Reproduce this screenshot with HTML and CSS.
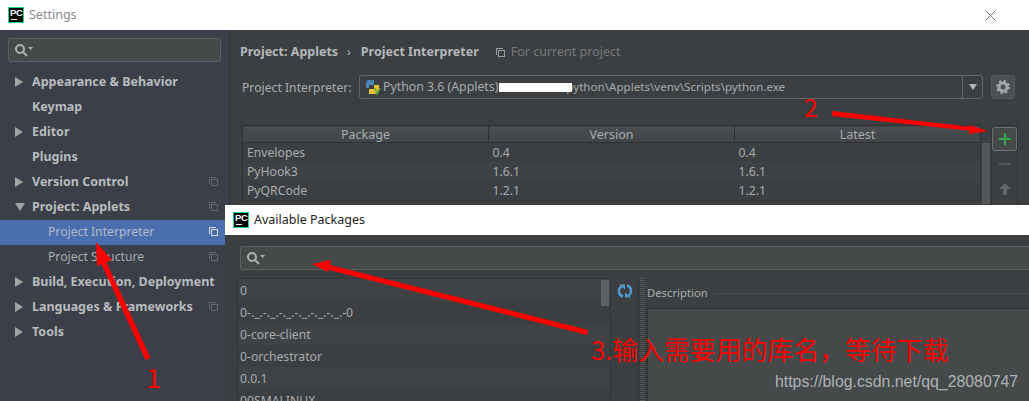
FILE: index.html
```html
<!DOCTYPE html>
<html lang="en">
<head>
<meta charset="utf-8">
<title>Settings</title>
<link rel="stylesheet" href="styles.css">
</head>
<body>
<div class="window">
  <header class="titlebar">
    <span class="pc-logo"><span class="pc-text">PC</span><span class="pc-bar"></span></span>
    <span class="title-text">Settings</span>
    <svg class="close" width="11" height="11" viewBox="0 0 11 11"><path d="M.5.5l10 10M10.5.5l-10 10" stroke="#777" fill="none"/></svg>
  </header>
  <div class="main">
    <aside class="sidebar">
      <div class="side-search">
        <svg width="19" height="14" viewBox="0 0 19 14"><circle cx="6" cy="6" r="4" fill="none" stroke="#afb1b3" stroke-width="2"/><path d="M9 9l4 4" stroke="#afb1b3" stroke-width="2.2"/><path d="M14 4h5l-2.500 3z" fill="#afb1b3"/></svg>
      </div>
      <ul class="tree">
        <li class="node"><i class="tri"></i><b>Appearance &amp; Behavior</b></li>
        <li class="node"><i class="tri none"></i><b>Keymap</b></li>
        <li class="node"><i class="tri"></i><b>Editor</b></li>
        <li class="node"><i class="tri none"></i><b>Plugins</b></li>
        <li class="node"><i class="tri"></i><b>Version Control</b><i class="copy"></i></li>
        <li class="node"><i class="tri open"></i><b>Project: Applets</b><i class="copy"></i></li>
        <li class="node sub selected"><span>Project Interpreter</span><i class="copy"></i></li>
        <li class="node sub"><span>Project Structure</span><i class="copy"></i></li>
        <li class="node"><i class="tri"></i><b>Build, Execution, Deployment</b></li>
        <li class="node"><i class="tri"></i><b>Languages &amp; Frameworks</b><i class="copy"></i></li>
        <li class="node"><i class="tri"></i><b>Tools</b></li>
      </ul>
    </aside>
    <section class="content">
      <div class="crumbs">
        <b>Project: Applets</b><span class="sep">›</span><b>Project Interpreter</b>
        <i class="copy light"></i><span class="scope">For current project</span>
      </div>
      <div class="interp-row">
        <label class="interp-label">Project Interpreter:</label>
        <div class="combo">
          <svg class="py" width="16" height="16" viewBox="0 0 16 16"><path d="M3 1h6v5H4v3H1V5c0-2 1-4 2-4z" fill="#4a86b8"/><path d="M9 6h5v4c0 3-2 5-4 5H4v-5h5z" fill="#e6c02f"/><path d="M10 9l2 6 3-6" fill="none" stroke="#5aa63c" stroke-width="1.500"/></svg>
          <span class="combo-text">Python 3.6 (Applets)<span class="redact"></span><span class="combo-path">python\Applets\venv\Scripts\python.exe</span></span>
          <span class="combo-btn"><i></i></span>
        </div>
        <button class="gear" type="button"><svg width="14" height="14" viewBox="0 0 14 14"><circle cx="7" cy="7" r="4" fill="none" stroke="#a3a6a8" stroke-width="3"/><circle cx="7" cy="7" r="6" fill="none" stroke="#a3a6a8" stroke-width="2" stroke-dasharray="2.300 2.400"/></svg></button>
      </div>
      <div class="packages">
        <table class="pkg-table">
          <thead><tr><th>Package</th><th>Version</th><th>Latest</th></tr></thead>
          <tbody>
            <tr><td>Envelopes</td><td>0.4</td><td>0.4</td></tr>
            <tr><td>PyHook3</td><td>1.6.1</td><td>1.6.1</td></tr>
            <tr><td>PyQRCode</td><td>1.2.1</td><td>1.2.1</td></tr>
          </tbody>
        </table>
        <div class="pkg-scroll"></div>
        <div class="pkg-tools">
          <span class="plus"><svg width="12" height="12" viewBox="0 0 12 12"><path d="M6 0v12M0 6h12" stroke="#2fa84f" stroke-width="2"/></svg></span>
          <span class="minus"></span>
          <svg class="up" width="12" height="12" viewBox="0 0 12 12"><path d="M6 0l6 6H8v6H4V6H0z" fill="#63676a"/></svg>
        </div>
      </div>
    </section>
  </div>
</div>

<div class="dialog">
  <header class="dlg-title">
    <span class="pc-logo"><span class="pc-text">PC</span><span class="pc-bar"></span></span>
    <span>Available Packages</span>
  </header>
  <div class="dlg-search">
    <svg width="19" height="14" viewBox="0 0 19 14"><circle cx="6" cy="6" r="4" fill="none" stroke="#afb1b3" stroke-width="2"/><path d="M9 9l4 4" stroke="#afb1b3" stroke-width="2.2"/><path d="M14 4h5l-2.500 3z" fill="#afb1b3"/></svg>
  </div>
  <div class="dlg-body">
    <div class="list-wrap">
      <ul class="dlg-list">
        <li>0</li>
        <li>0-._.-._.-._.-._.-._.-._.-0</li>
        <li>0-core-client</li>
        <li>0-orchestrator</li>
        <li>0.0.1</li>
        <li>00SMALINUX</li>
      </ul>
      <div class="list-scroll"></div>
    </div>
    <div class="refresh">
      <svg width="16" height="16" viewBox="0 0 16 16"><path d="M6 13.500A5.500 5.500 0 0 1 4.500 3.500M10 2.500a5.500 5.500 0 0 1 1.500 10" fill="none" stroke="#4f9bd0" stroke-width="2.400"/><path d="M2 1.500h6v5zM14 14.500H8v-5z" fill="#4f9bd0"/></svg>
    </div>
    <div class="splitter"></div>
    <div class="desc">
      <div class="desc-head"><span>Description</span><i></i></div>
      <div class="desc-panel"></div>
    </div>
  </div>
</div>

<svg class="marks" width="1029" height="401" viewBox="0 0 1029 401">
  <g fill="#f00" stroke="none">
    <path d="M145.500 360l5-2-46-100-5 2z"/><path d="M96 242l16 18-15 6z"/>
    <path d="M832 111l0 5 140 15 0-4z"/><path d="M988 131l-19-6 0 9z"/>
    <path d="M588 330l-1 5-262-66 1-5z"/><path d="M312 264l19-4-3 12z"/>
  </g>
</svg>
<span class="note note-1">1</span>
<span class="note note-2">2</span>
<span class="note note-3">3.输入需要用的库名，等待下载</span>
<span class="watermark">https://blog.csdn.net/qq_28080747</span>
</body>
</html>
```
FILE: styles.css
```css
* { box-sizing: border-box; }
html, body { margin: 0; padding: 0; }
body {
  width: 1029px; height: 401px; overflow: hidden; position: relative;
  background: #3c3f41; color: #bbbbbb;
  font: 12.200px/18px "Noto Sans", "Open Sans", sans-serif;
}
ul { list-style: none; margin: 0; padding: 0; }
b { font-weight: 700; font-size: 12.500px; }
.window { display: flex; flex-direction: column; height: 401px; }
.titlebar {
  height: 30px; flex: none; background: #fff; display: flex; align-items: center;
  padding: 0 33px 0 8px; color: #8a8a8a; font-size: 12.500px;
}
.title-text { margin-left: 5px; }
.close { margin-left: auto; }
.pc-logo {
  width: 16px; height: 16px; flex: none; background: #000; border: 1px solid #21d789;
  display: flex; flex-direction: column; color: #fff; overflow: hidden; position: relative;
}
.pc-text { font: 700 9.500px/10px "Liberation Sans", sans-serif; padding-left: 1px; letter-spacing: -.3px; }
.pc-bar { width: 6px; height: 1px; background: #fff; margin: 1px 0 0 2px; }
.main { display: flex; flex: 1; min-height: 0; }
.sidebar {
  width: 230px; flex: none; background: #3c3f49; border-right: 1px solid #33363a;
  padding-top: 8px;
}
.side-search {
  width: 213px; height: 24px; margin-left: 8px; background: #45494a;
  border: 1px solid #5e6060; border-radius: 3px; display: flex; align-items: center; padding-left: 5px;
}
.tree { margin-top: 8px; }
.node {
  height: 25px; display: flex; align-items: center; padding: 0 0 2px 15px; color: #b9bbbd;
}
.node b { margin-left: 9px; }
.node.sub { padding-left: 48px; color: #a9abad; }
.node.selected { background: #4b6eaf; color: #b4bac6; }
.tri {
  width: 8px; height: 10px; flex: none; border-left: 8px solid #a0a2a4;
  border-top: 5px solid transparent; border-bottom: 5px solid transparent;
}
.tri.none { border-color: transparent; }
.tri.open { width: 10px; height: 8px; border: 0; border-top: 8px solid #a0a2a4; border-left: 5px solid transparent; border-right: 5px solid transparent; margin-right: -2px; }
.copy {
  width: 7px; height: 7px; margin-left: auto; margin-right: 11px; margin-top: 2px; flex: none;
  border: 1px solid #62656a; box-shadow: -1px -1px 0 0 #3c3f49, -2px -2px 0 0 #62656a;
}
.selected .copy { border-color: #d5d9e2; box-shadow: -1px -1px 0 0 #4b6eaf, -2px -2px 0 0 #d5d9e2; }
.copy.light { margin: 2px 0 0 19px; width: 7px; height: 7px; border-color: #9a9da0; box-shadow: -1px -1px 0 0 #3c3f41, -2px -2px 0 0 #9a9da0; }
.content { flex: 1; min-width: 0; padding: 11px 0 0 10px; }
.crumbs { display: flex; align-items: center; height: 22px; color: #b5b7b9; }
.sep { margin: 0 10px 0 9px; }
.scope { margin-left: 6px; color: #77797b; font-size: 12.500px; }
.interp-row { display: flex; align-items: center; margin-top: 12px; height: 24px; padding-left: 2px; }
.interp-label { width: 117px; flex: none; color: #a9abad; padding-top: 1px; }
.combo {
  width: 624px; height: 24px; flex: none; border: 1px solid #646464; border-radius: 3px;
  display: flex; align-items: center; padding-left: 5px; color: #a9abad; background: #3c3f41;
}
.py { flex: none; }
.combo-text { margin-left: 2px; white-space: nowrap; font-size: 12.300px; }
.redact { display: inline-block; position: relative; z-index: 1; width: 73px; height: 9px; background: #fff; margin: 0 -6px 0 1px; vertical-align: -1px; }
.combo-path { font-size: 11.600px; }
.combo-btn { margin-left: auto; width: 20px; height: 22px; border-left: 1px solid #646464; display: flex; align-items: center; justify-content: center; flex: none; }
.combo-btn i { border-top: 6px solid #b4b6b8; border-left: 4px solid transparent; border-right: 4px solid transparent; }
.gear {
  width: 24px; height: 24px; margin-left: 8px; flex: none; padding: 0; border: 1px solid #555859;
  border-radius: 3px; background: #4c5052; display: flex; align-items: center; justify-content: center;
}
.packages { display: flex; margin-top: 26px; margin-left: 2px; }
.pkg-table {
  width: 739px; flex: none; border-collapse: collapse; table-layout: fixed; border: 1px solid #2f3133;
  background: #3c3f41; align-self: flex-start;
}
.pkg-table th {
  height: 17px; padding: 1px 0 0; font-weight: 400; font-size: 12.500px; line-height: 15px; color: #a9abad;
  background: linear-gradient(#4a4d4f, #424547); border-bottom: 1px solid #2f3133; border-left: 1px solid #2f3133;
}
.pkg-table th:first-child { border-left: 0; }
.pkg-table td { height: 19px; padding: 1px 0 0 4px; line-height: 18px; color: #a9abad; }
.pkg-table td:first-child { padding-left: 4px; }
.pkg-table tbody tr:nth-child(even) { background: #3f4244; }
.pkg-scroll { width: 8px; height: 61px; margin: 18px 0 0 1px; flex: none; background: #55585a; }
.pkg-tools {
  width: 27px; flex: none; height: 80px; margin-left: 1px; border-left: 1px solid #333;
  border-right: 1px solid #333; border-top: 1px solid #2f3133; display: flex; flex-direction: column; align-items: center;
  padding-top: 1px;
}
.plus {
  width: 25px; height: 24px; flex: none; border: 1px solid #6e7173; border-radius: 3px; background: #45494a;
  display: flex; align-items: center; justify-content: center;
}
.minus { width: 12px; height: 2px; background: #55585a; margin-top: 12px; flex: none; }
.up { margin-top: 18px; flex: none; }
.dialog {
  position: absolute; left: 225px; top: 205px; width: 804px; height: 196px; background: #3c3f41;
  overflow: hidden;
}
.dlg-title {
  height: 30px; background: #fff; display: flex; align-items: center; gap: 5px; padding-left: 8px;
  color: #222; font-size: 12.500px;
}
.dlg-search {
  height: 24px; margin: 11px 0 0 15px; background: #45494a; border: 1px solid #5e6060;
  border-radius: 3px 0 0 3px; border-right: 0; display: flex; align-items: center; padding-left: 5px;
}
.dlg-body { display: flex; margin-top: 8px; height: 123px; }
.list-wrap { width: 374px; flex: none; margin-left: 12px; position: relative; border: 1px solid #333537; border-bottom: 0; background: #3c3f41; }
.dlg-list li { height: 22px; padding: 1px 0 0 2px; line-height: 22px; color: #a9abad; white-space: nowrap; }
.dlg-list li:nth-child(odd) { background: #404345; }
.list-scroll { position: absolute; right: 1px; top: 1px; width: 8px; height: 26px; background: #5f6264; }
.refresh { width: 28px; flex: none; border-right: 1px solid #333537; display: flex; justify-content: center; padding-top: 5px; }
.splitter {
  width: 5px; flex: none; margin-left: 1px;
  background: repeating-linear-gradient(#55585a 0 1px, #36383a 1px 2px);
}
.desc { flex: 1; min-width: 0; margin-left: 2px; }
.desc-head { display: flex; align-items: center; height: 30px; color: #a9abad; font-size: 11.300px; }
.desc-head i { flex: 1; height: 1px; background: #4e5153; margin-left: 6px; }
.desc-panel { height: 93px; background: #45494a; border-top: 1px solid #323436; border-left: 1px solid #323436; }
.marks { position: absolute; left: 0; top: 0; pointer-events: none; }
.note { position: absolute; color: #f00; white-space: nowrap; font-family: "Noto Sans CJK SC", sans-serif; font-weight: 400; }
.note-1 { left: 146px; top: 360px; font-size: 27px; line-height: 34px; }
.note-2 { left: 804px; top: 89px; font-size: 25px; line-height: 34px; }
.note-3 { left: 591px; top: 331px; font-size: 25.850px; line-height: 36px; }
.watermark {
  position: absolute; left: 775px; top: 373px; color: #b0b2b4; white-space: nowrap;
  font: 15.850px/18px "Liberation Sans", sans-serif;
}
```
